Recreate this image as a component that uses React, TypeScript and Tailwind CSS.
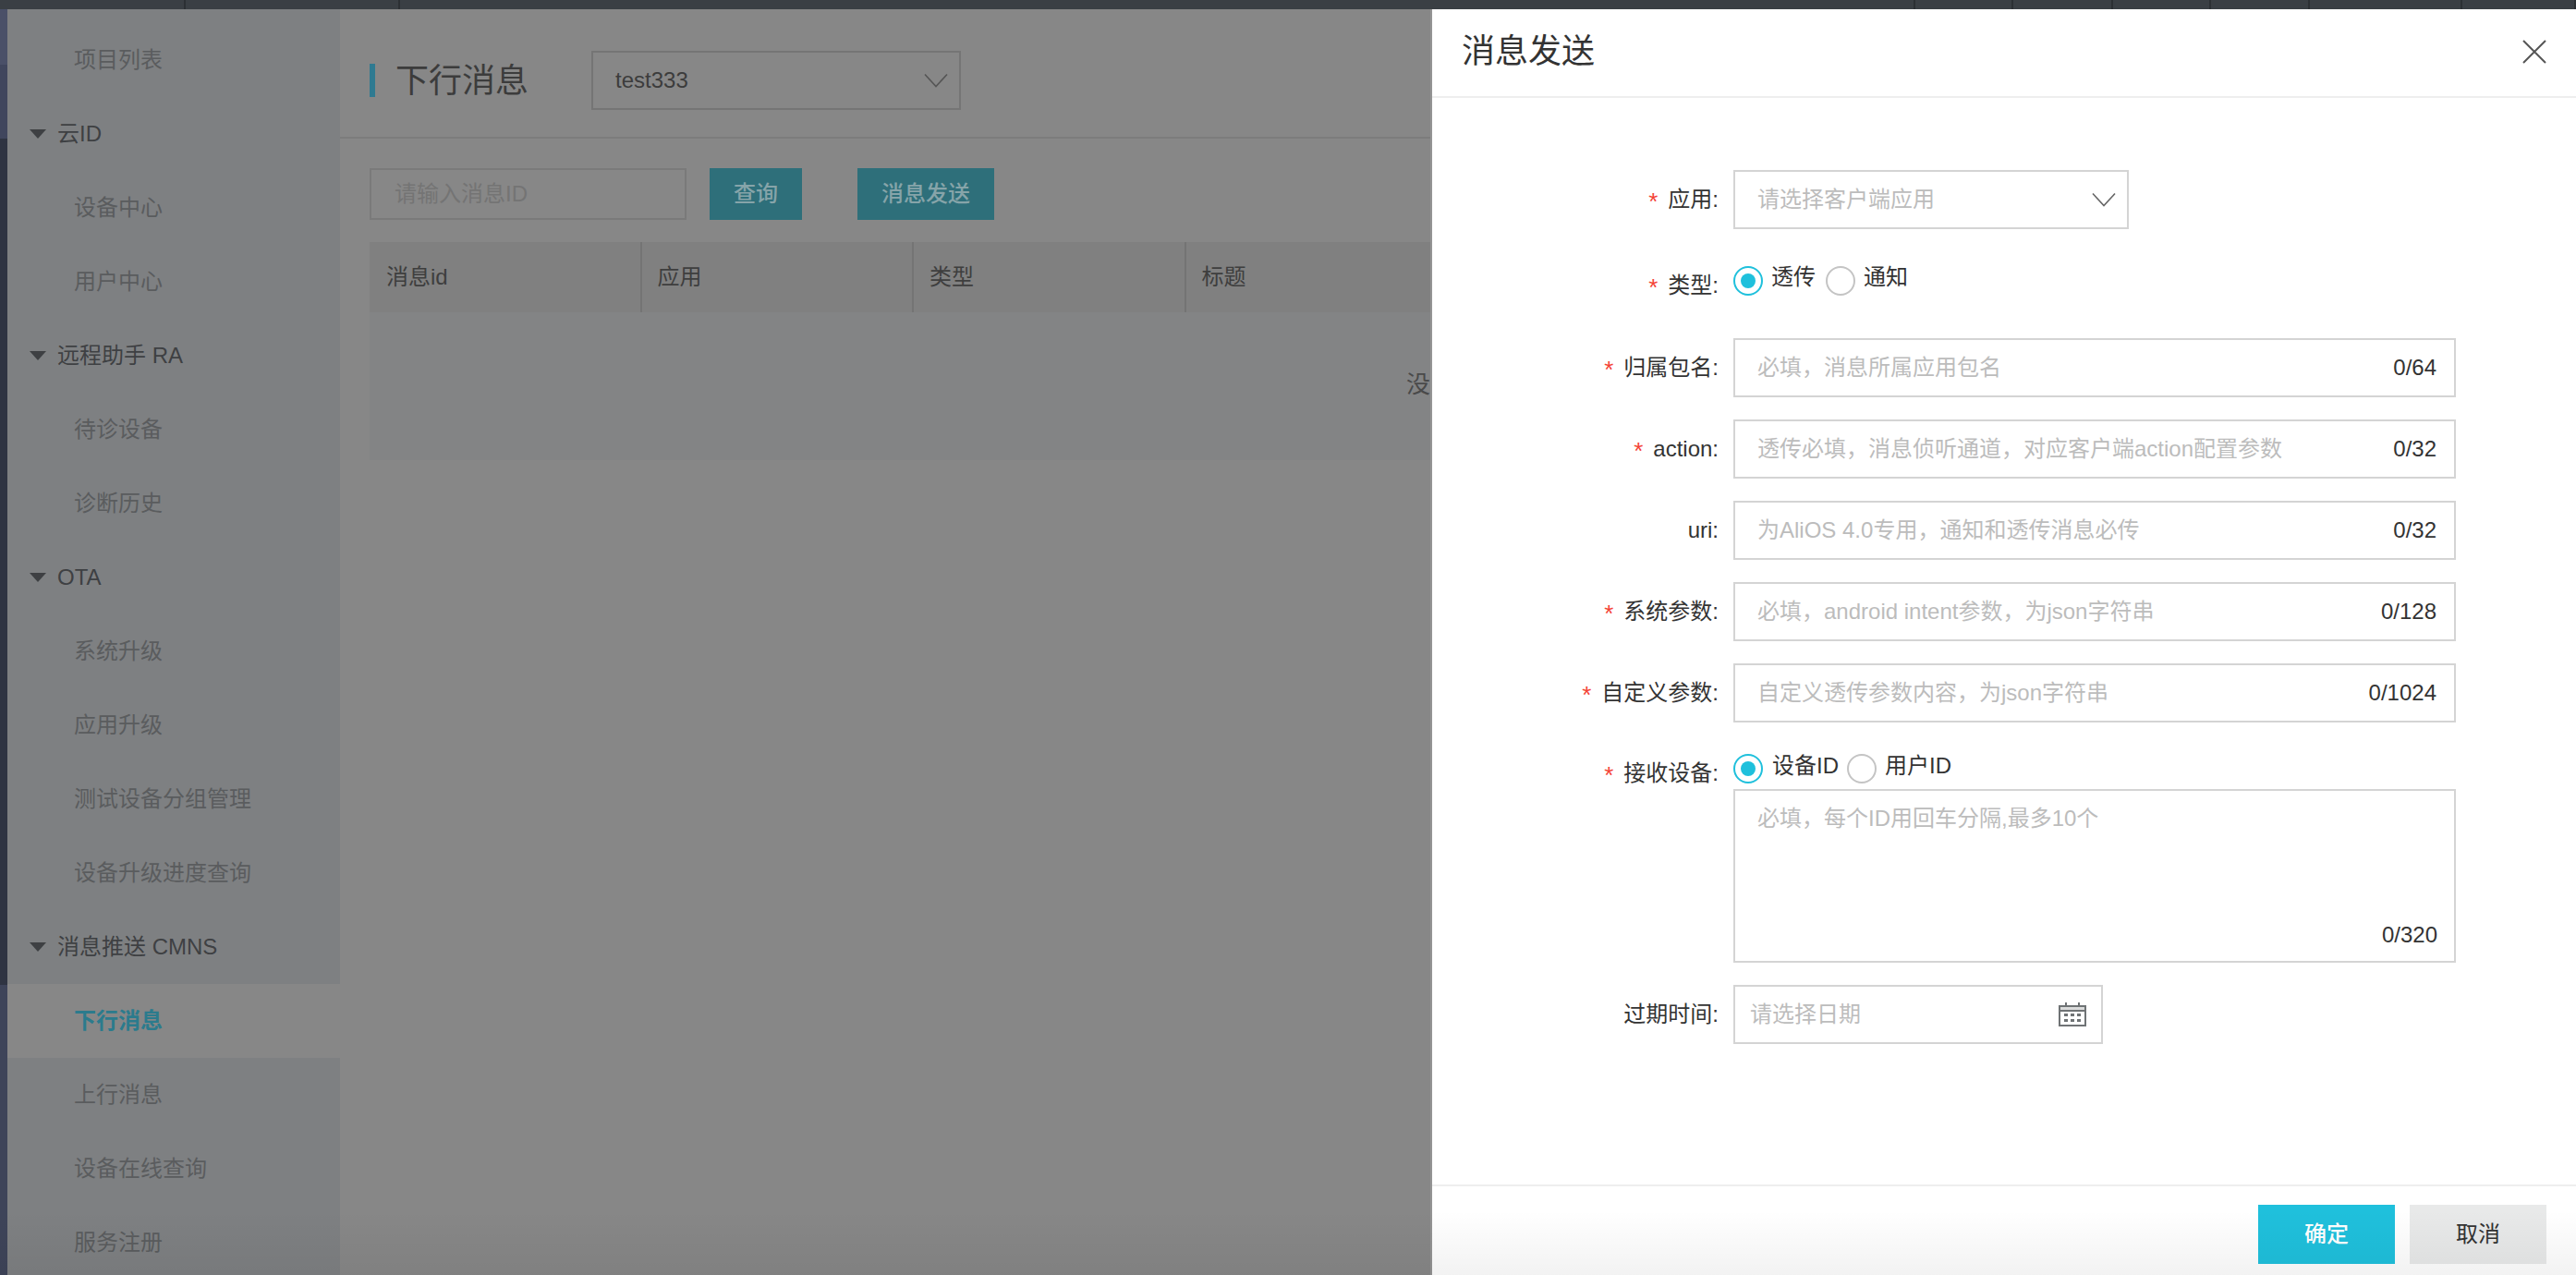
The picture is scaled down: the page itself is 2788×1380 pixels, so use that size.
import React from "react";

const topCells = [201, 232, 1640, 106, 108, 106, 107, 165, 123];

const menu: { label: string; parent?: boolean; active?: boolean }[] = [
  { label: "项目列表" },
  { label: "云ID", parent: true },
  { label: "设备中心" },
  { label: "用户中心" },
  { label: "远程助手 RA", parent: true },
  { label: "待诊设备" },
  { label: "诊断历史" },
  { label: "OTA", parent: true },
  { label: "系统升级" },
  { label: "应用升级" },
  { label: "测试设备分组管理" },
  { label: "设备升级进度查询" },
  { label: "消息推送 CMNS", parent: true },
  { label: "下行消息", active: true },
  { label: "上行消息" },
  { label: "设备在线查询" },
  { label: "服务注册" },
];

function Chevron({ color }: { color: string }) {
  return (
    <svg width="26" height="16" viewBox="0 0 26 16" fill="none" className="shrink-0">
      <path d="M1 1.5 L13 14.5 L25 1.5" stroke={color} strokeWidth="1.6" />
    </svg>
  );
}

function Radio({ on }: { on?: boolean }) {
  return on ? (
    <span className="flex h-8 w-8 shrink-0 items-center justify-center rounded-full border-2 border-[#1fc0dc] bg-white">
      <span className="h-4 w-4 rounded-full bg-[#1fc0dc]" />
    </span>
  ) : (
    <span className="h-8 w-8 shrink-0 rounded-full border-2 border-[#c4c4c4] bg-white" />
  );
}

function Label({ text, required, className }: { text: string; required?: boolean; className?: string }) {
  return (
    <div className={"flex w-[310px] shrink-0 items-center justify-end gap-[11px] text-[24px] leading-[32px] text-[#333] " + (className ?? "")}>
      {required && <span className="mt-[4px] text-[26px] leading-[24px] text-[#f44336]">*</span>}
      <span>{text}:</span>
    </div>
  );
}

function TextField({ label, required, placeholder, count }: { label: string; required?: boolean; placeholder: string; count: string }) {
  return (
    <div className="flex items-center gap-[16px]">
      <Label text={label} required={required} />
      <div className="flex h-16 w-[782px] items-center justify-between border-2 border-[#d4d4d4] pl-[24px] pr-[19px] text-[24px]">
        <span className="text-[#bcbcbc]">{placeholder}</span>
        <span className="text-[#333]">{count}</span>
      </div>
    </div>
  );
}

export default function App() {
  return (
    <div className="flex h-[1380px] w-[2788px] flex-col overflow-hidden bg-[#878787] font-['Liberation_Sans','Noto_Sans_CJK_SC',sans-serif]">
      {/* top bar */}
      <div className="flex h-[10px] shrink-0 bg-[#3a3f44]">
        {topCells.map((w, i) => (
          <div key={i} style={{ width: w }} className="h-full shrink-0 border-r-2 border-[#2c3034]" />
        ))}
      </div>

      <div className="relative flex min-h-0 flex-1">
        {/* rail */}
        <div className="flex w-2 shrink-0 flex-col">
          <div className="h-[60px] bg-[#4a5068]" />
          <div className="h-[80px] bg-[#40465d]" />
          <div className="h-[916px] bg-[#2f3442]" />
          <div className="flex-1 bg-[#3e4459]" />
        </div>

        {/* sidebar */}
        <div className="flex w-[360px] shrink-0 flex-col bg-[#7e8082] pt-[15px] text-[24px]">
          {menu.map((m) =>
            m.parent ? (
              <div key={m.label} className="flex h-20 shrink-0 items-center pl-[24px] text-[#3e4043]">
                <span className="mr-[12px] h-0 w-0 border-x-[9px] border-t-[10px] border-x-transparent border-t-[#3e4043]" />
                <span>{m.label}</span>
              </div>
            ) : m.active ? (
              <div key={m.label} className="-mr-px flex h-20 shrink-0 items-center bg-[#878787] pl-[72px] font-bold text-[#2b7b8d]">
                {m.label}
              </div>
            ) : (
              <div key={m.label} className="flex h-20 shrink-0 items-center pl-[72px] text-[#5a5c5e]">
                {m.label}
              </div>
            )
          )}
        </div>

        {/* main */}
        <div className="flex w-[1180px] shrink-0 flex-col overflow-hidden">
          <div className="flex h-[140px] shrink-0 items-center border-b-2 border-[#7c7c7c] pt-[16px] pl-8">
            <span className="h-[36px] w-[6px] bg-[#2f7a91]" />
            <span className="ml-[22px] mt-[2px] text-[36px] text-[#3c3c3c]">下行消息</span>
            <div className="ml-[68px] flex h-16 w-[400px] items-center justify-between border-2 border-[#757575] pl-[24px] pr-[12px] text-[24px] text-[#3c3c3c]">
              <span>test333</span>
              <Chevron color="#555" />
            </div>
          </div>

          <div className="flex h-14 shrink-0 items-stretch pl-8 mt-8 text-[24px]">
            <div className="flex w-[343px] items-center border-2 border-[#7a7a7a] pl-[25px] text-[#747474]">请输入消息ID</div>
            <div className="ml-[25px] flex w-[100px] items-center justify-center bg-[#2e6f7a] font-medium text-[#86a4a9]">查询</div>
            <div className="ml-[60px] flex w-[148px] items-center justify-center bg-[#2e6f7a] font-medium text-[#86a4a9]">消息发送</div>
          </div>

          <div className="ml-8 mt-6 flex w-[2348px] shrink-0 flex-col">
            <div className="flex h-[76px] bg-[#808080] text-[24px] text-[#3e3e3e]">
              <div className="flex w-[294.5px] shrink-0 items-center border-r-2 border-[#747474] pl-[18px]">消息id</div>
              <div className="flex w-[294.5px] shrink-0 items-center border-r-2 border-[#747474] pl-[17px]">应用</div>
              <div className="flex w-[294.5px] shrink-0 items-center border-r-2 border-[#747474] pl-[17px]">类型</div>
              <div className="flex flex-1 items-center pl-[17px]">标题</div>
            </div>
            <div className="flex h-[160px] items-center justify-center bg-[#838485] pb-[3px] text-[26px] text-[#4a4a4a]">
              没有数据
            </div>
          </div>
        </div>

        {/* drawer */}
        <div className="flex min-w-0 flex-1 flex-col border-l-2 border-[#949494] bg-white">
          <div className="flex h-[96px] shrink-0 items-center justify-between border-b-2 border-[#eee] pb-[3px] pl-[32px] pr-[32px]">
            <span className="text-[36px] text-[#333]">消息发送</span>
            <svg width="26" height="26" viewBox="0 0 26 26" fill="none">
              <path d="M1 1 L25 25 M25 1 L1 25" stroke="#555" strokeWidth="2" />
            </svg>
          </div>

          <div className="flex min-h-0 flex-1 flex-col pt-[78px]">
            {/* app */}
            <div className="flex items-center gap-[16px]">
              <Label text="应用" required />
              <div className="flex h-16 w-[428px] items-center justify-between border-2 border-[#d4d4d4] pl-[24px] pr-[12px] text-[24px] text-[#bcbcbc]">
                <span>请选择客户端应用</span>
                <Chevron color="#666" />
              </div>
            </div>

            {/* type */}
            <div className="mt-[40px] flex h-[32px] items-center gap-[16px]">
              <Label text="类型" required className="mt-[10px]" />
              <div className="flex items-center text-[24px] text-[#333]">
                <Radio on />
                <span className="ml-[9px] mb-[8px] w-[59px]">透传</span>
                <Radio />
                <span className="ml-[9px] mb-[8px]">通知</span>
              </div>
            </div>

            <div className="mt-[46px] flex flex-col gap-[24px]">
              <TextField label="归属包名" required placeholder="必填，消息所属应用包名" count="0/64" />
              <TextField label="action" required placeholder="透传必填，消息侦听通道，对应客户端action配置参数" count="0/32" />
              <TextField label="uri" placeholder="为AliOS 4.0专用，通知和透传消息必传" count="0/32" />
              <TextField label="系统参数" required placeholder="必填，android intent参数，为json字符串" count="0/128" />
              <TextField label="自定义参数" required placeholder="自定义透传参数内容，为json字符串" count="0/1024" />
            </div>

            {/* receiver */}
            <div className="mt-[34px] flex gap-[16px]">
              <Label text="接收设备" required className="mt-[5px] self-start" />
              <div className="flex flex-col">
                <div className="flex h-[32px] items-center text-[24px] text-[#333]">
                  <Radio on />
                  <span className="ml-[10px] mb-[6px] w-[81px]">设备ID</span>
                  <Radio />
                  <span className="ml-[9px] mb-[6px]">用户ID</span>
                </div>
                <div className="mt-[6px] flex h-[188px] w-[782px] flex-col justify-between border-2 border-[#d4d4d4] pb-[10px] pl-[24px] pr-[18px] pt-[12px] text-[24px]">
                  <span className="text-[#bcbcbc]">必填，每个ID用回车分隔,最多10个</span>
                  <span className="self-end text-[#333]">0/320</span>
                </div>
              </div>
            </div>

            {/* expiry */}
            <div className="mt-[24px] flex items-center gap-[16px]">
              <Label text="过期时间" />
              <div className="flex h-16 w-[400px] items-center justify-between border-2 border-[#d4d4d4] pl-[16px] pr-[16px] text-[24px] text-[#bcbcbc]">
                <span>请选择日期</span>
                <svg width="30" height="26" viewBox="0 0 30 26" fill="none">
                  <path d="M1 4 H29 V25 H1 Z" stroke="#6f7375" strokeWidth="2" />
                  <path d="M1 4 H29 V9 H1 Z" fill="#6f7375" fillOpacity="0.25" />
                  <path d="M8 0 V5 M22 0 V5" stroke="#6f7375" strokeWidth="2" />
                  <path d="M1 9 H29" stroke="#6f7375" strokeWidth="2" />
                  <path d="M6 12 h4 v3 h-4 Z M13 12 h4 v3 h-4 Z M20 12 h4 v3 h-4 Z M6 18 h4 v3 h-4 Z M13 18 h4 v3 h-4 Z M20 18 h4 v3 h-4 Z" fill="#6f7375" />
                </svg>
              </div>
            </div>
          </div>

          <div className="flex h-[98px] shrink-0 justify-end gap-[16px] border-t-2 border-[#eee] pr-[32px] pt-[20px] text-[24px]">
            <div className="flex h-16 w-[148px] items-center justify-center bg-[#1fc0dc] font-medium text-white">确定</div>
            <div className="flex h-16 w-[148px] items-center justify-center bg-[#e8e9e9] text-[#333]">取消</div>
          </div>
        </div>

        {/* screen-edge shading over the bottom of the page */}
        <div className="pointer-events-none absolute inset-x-0 bottom-0 h-[70px] bg-gradient-to-b from-transparent to-black/5" />
      </div>
    </div>
  );
}
